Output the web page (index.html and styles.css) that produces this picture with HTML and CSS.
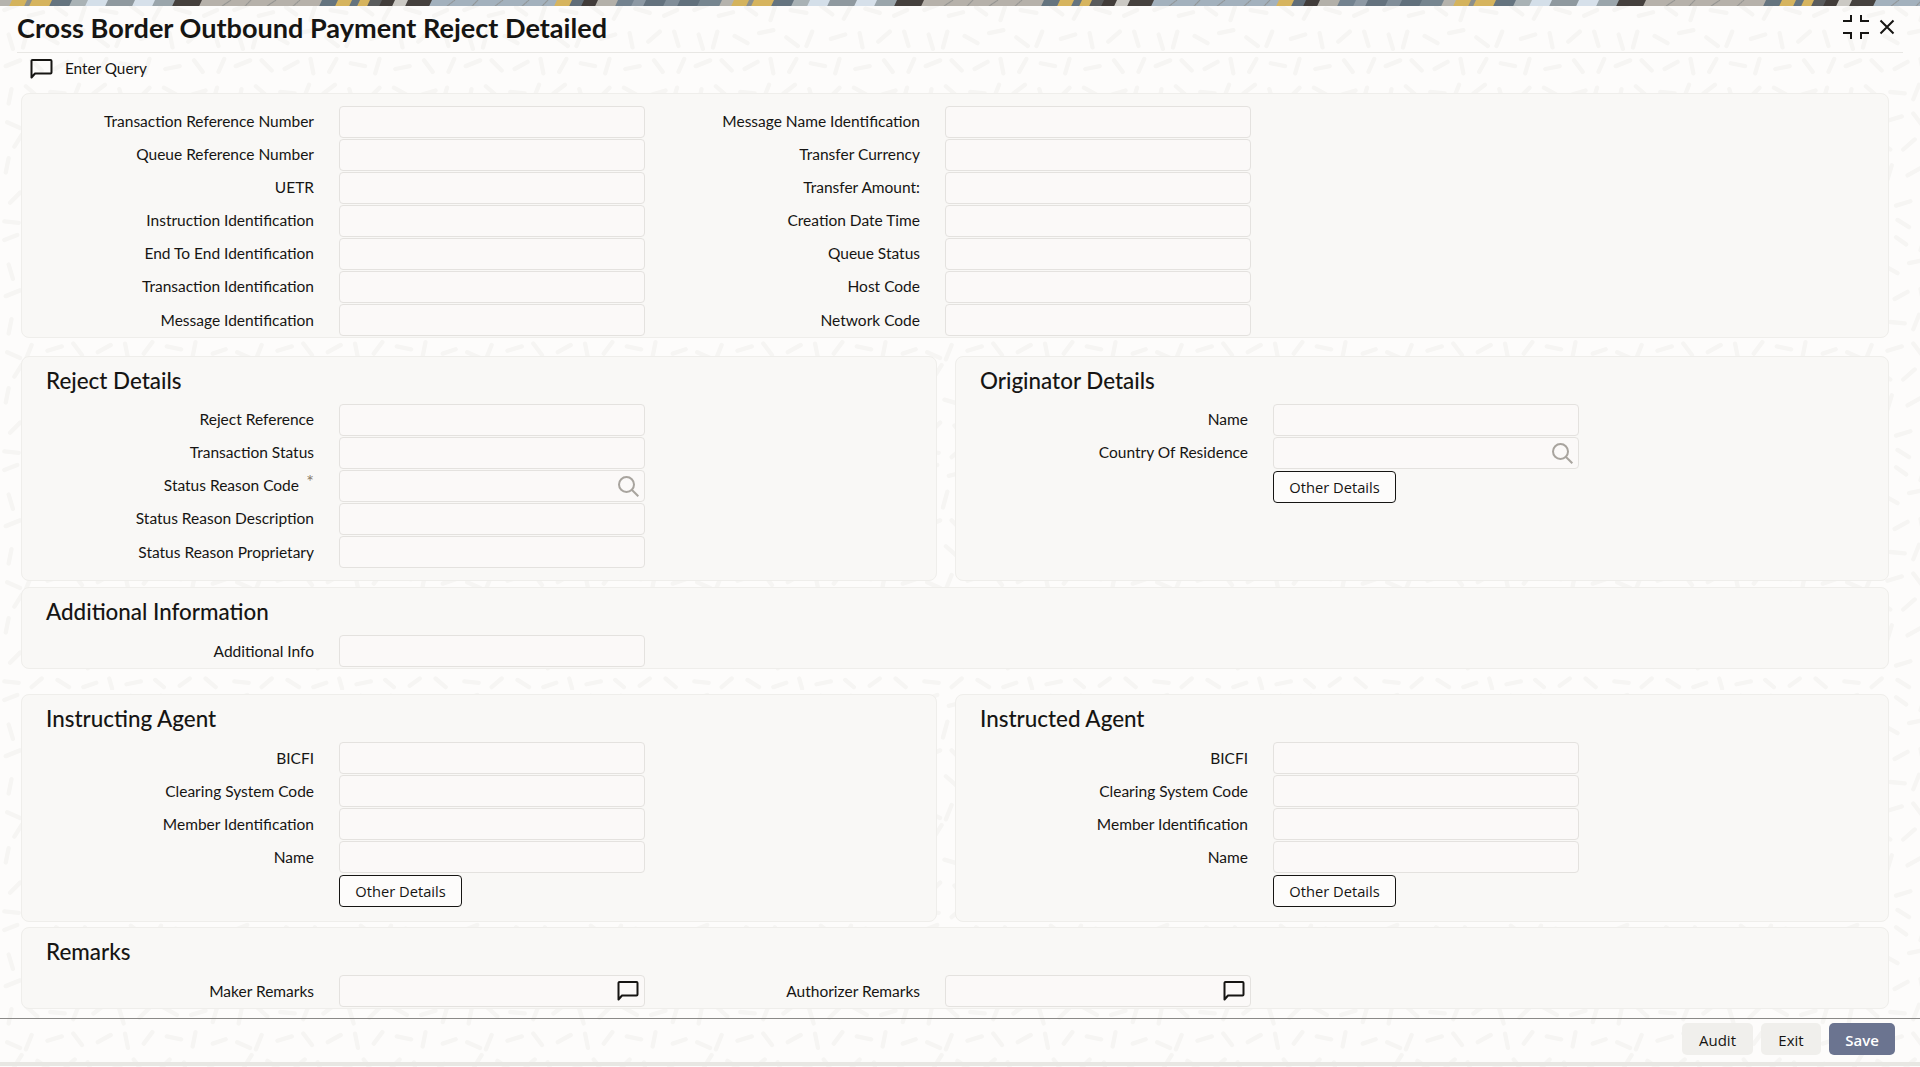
FILE: index.html
```html
<!DOCTYPE html>
<html lang="en">
<head>
<meta charset="utf-8">
<title>Cross Border Outbound Payment Reject Detailed</title>
<link rel="stylesheet" href="styles.css">
</head>
<body>
<svg class="banner" width="1920" height="6" aria-hidden="true">
  <defs>
    <pattern id="band" width="722" height="6" patternUnits="userSpaceOnUse" patternTransform="skewX(-25)">
      <rect width="722" height="6" fill="#b8b3ac"/>
      <rect x="0" width="12" height="6" fill="#b5b3ad"/>
      <rect x="12" width="15" height="6" fill="#d4b35c"/>
      <rect x="27" width="5" height="6" fill="#8b8f8c"/>
      <rect x="32" width="20" height="6" fill="#d6b45e"/>
      <rect x="52" width="20" height="6" fill="#65747f"/>
      <rect x="72" width="16" height="6" fill="#a9b2b5"/>
      <rect x="88" width="20" height="6" fill="#d4dfe9"/>
      <rect x="108" width="27" height="6" fill="#8f999f"/>
      <rect x="135" width="20" height="6" fill="#d6e0ea"/>
      <rect x="155" width="20" height="6" fill="#9aa5ab"/>
      <rect x="175" width="27" height="6" fill="#45403d"/>
      <rect x="202" width="120" height="6" fill="#b6b1aa"/>
      <rect x="322" width="16" height="6" fill="#65747f"/>
      <rect x="338" width="14" height="6" fill="#d6b45e"/>
      <rect x="352" width="8" height="6" fill="#65747f"/>
      <rect x="360" width="10" height="6" fill="#d6b45e"/>
      <rect x="370" width="12" height="6" fill="#5a5c5d"/>
      <rect x="382" width="13" height="6" fill="#423d3a"/>
      <rect x="395" width="13" height="6" fill="#cbc9c4"/>
      <rect x="408" width="24" height="6" fill="#46413e"/>
      <rect x="432" width="125" height="6" fill="#a3b1bd"/>
      <rect x="557" width="15" height="6" fill="#d6b45e"/>
      <rect x="572" width="12" height="6" fill="#616e79"/>
      <rect x="584" width="14" height="6" fill="#413c3a"/>
      <rect x="598" width="20" height="6" fill="#b3b0a9"/>
      <rect x="618" width="16" height="6" fill="#73828f"/>
      <rect x="634" width="12" height="6" fill="#8d99a4"/>
      <rect x="646" width="20" height="6" fill="#64727e"/>
      <rect x="666" width="14" height="6" fill="#818e99"/>
      <rect x="680" width="20" height="6" fill="#61707c"/>
      <rect x="700" width="22" height="6" fill="#76858f"/>
      <path d="M225 6l6-6M248 6l3-6M270 6l6-6M296 6l4-6M450 6l5-6M475 6l3-6M498 6l5-6M525 6l4-6M545 6l3-6" stroke="#8b8c8a" stroke-width="1" fill="none"/>
    </pattern>
  </defs>
  <rect width="1920" height="6" fill="url(#band)"/>
</svg>

<header class="titlebar">
  <h1 class="title">Cross Border Outbound Payment Reject Detailed</h1>
  <div class="window-actions">
    <svg class="icon-collapse" width="26" height="24" viewBox="0 0 26 24" fill="none" stroke="#161513" stroke-width="2"><path d="M8 0v6H0M18 0v6h8M8 24v-6H0M18 24v-6h8"/></svg>
    <svg class="icon-close" width="16" height="16" viewBox="0 0 16 16" fill="none" stroke="#161513" stroke-width="2"><path d="M1.5 1.5l13 13M14.5 1.5l-13 13"/></svg>
  </div>
</header>

<div class="toolbar">
  <svg class="icon-comment" width="23" height="20" viewBox="0 0 23 20" fill="none" stroke="#161513" stroke-width="2"><path d="M1.5 18.500V2a1 1 0 0 1 1-1h18a1 1 0 0 1 1 1v11.500a1 1 0 0 1-1 1H5z" stroke-linejoin="round"/></svg>
  <span class="toolbar-label">Enter Query</span>
</div>

<main class="content">
  <section class="panel panel-top">
    <div class="fields fields-two">
      <label class="lbl">Transaction Reference Number</label><div class="inp"></div><label class="lbl lbl-b">Message Name Identification</label><div class="inp"></div>
      <label class="lbl">Queue Reference Number</label><div class="inp"></div><label class="lbl lbl-b">Transfer Currency</label><div class="inp"></div>
      <label class="lbl">UETR</label><div class="inp"></div><label class="lbl lbl-b">Transfer Amount:</label><div class="inp"></div>
      <label class="lbl">Instruction Identification</label><div class="inp"></div><label class="lbl lbl-b">Creation Date Time</label><div class="inp"></div>
      <label class="lbl">End To End Identification</label><div class="inp"></div><label class="lbl lbl-b">Queue Status</label><div class="inp"></div>
      <label class="lbl">Transaction Identification</label><div class="inp"></div><label class="lbl lbl-b">Host Code</label><div class="inp"></div>
      <label class="lbl lbl-last">Message Identification</label><div class="inp"></div><label class="lbl lbl-b lbl-last">Network Code</label><div class="inp"></div>
    </div>
  </section>

  <div class="split split-first">
    <section class="panel panel-reject">
      <h2 class="heading">Reject Details</h2>
      <div class="fields">
        <label class="lbl">Reject Reference</label><div class="inp"></div>
        <label class="lbl">Transaction Status</label><div class="inp"></div>
        <label class="lbl lbl-req">Status Reason Code<span class="req">*</span></label>
        <div class="inp inp-icon"><svg class="icon-search" width="21" height="21" viewBox="0 0 21 21" fill="none" stroke="#a8a49e" stroke-width="2"><circle cx="8.500" cy="8.500" r="7.500"/><path d="M14 14l6.300 6.300"/></svg></div>
        <label class="lbl">Status Reason Description</label><div class="inp"></div>
        <label class="lbl lbl-last">Status Reason Proprietary</label><div class="inp"></div>
      </div>
    </section>
    <section class="panel">
      <h2 class="heading">Originator Details</h2>
      <div class="fields">
        <label class="lbl">Name</label><div class="inp"></div>
        <label class="lbl">Country Of Residence</label>
        <div class="inp inp-icon"><svg class="icon-search" width="21" height="21" viewBox="0 0 21 21" fill="none" stroke="#a8a49e" stroke-width="2"><circle cx="8.500" cy="8.500" r="7.500"/><path d="M14 14l6.300 6.300"/></svg></div>
        <span></span><button class="btn-outline">Other Details</button>
      </div>
    </section>
  </div>

  <section class="panel panel-single panel-additional">
    <h2 class="heading">Additional Information</h2>
    <div class="fields">
      <label class="lbl">Additional Info</label><div class="inp"></div>
    </div>
  </section>

  <div class="split split-agents">
    <section class="panel panel-agent">
      <h2 class="heading">Instructing Agent</h2>
      <div class="fields">
        <label class="lbl">BICFI</label><div class="inp"></div>
        <label class="lbl">Clearing System Code</label><div class="inp"></div>
        <label class="lbl">Member Identification</label><div class="inp"></div>
        <label class="lbl">Name</label><div class="inp"></div>
        <span></span><button class="btn-outline">Other Details</button>
      </div>
    </section>
    <section class="panel panel-agent">
      <h2 class="heading">Instructed Agent</h2>
      <div class="fields">
        <label class="lbl">BICFI</label><div class="inp"></div>
        <label class="lbl">Clearing System Code</label><div class="inp"></div>
        <label class="lbl">Member Identification</label><div class="inp"></div>
        <label class="lbl">Name</label><div class="inp"></div>
        <span></span><button class="btn-outline">Other Details</button>
      </div>
    </section>
  </div>

  <section class="panel panel-single panel-remarks">
    <h2 class="heading">Remarks</h2>
    <div class="fields fields-two">
      <label class="lbl">Maker Remarks</label>
      <div class="inp inp-icon"><svg class="icon-remark" width="22" height="20" viewBox="0 0 22 20" fill="none" stroke="#161513" stroke-width="2"><path d="M1.500 18.500V2a1 1 0 0 1 1-1h17a1 1 0 0 1 1 1v11.500a1 1 0 0 1-1 1H5z" stroke-linejoin="round"/></svg></div>
      <label class="lbl lbl-b">Authorizer Remarks</label>
      <div class="inp inp-icon"><svg class="icon-remark" width="22" height="20" viewBox="0 0 22 20" fill="none" stroke="#161513" stroke-width="2"><path d="M1.500 18.500V2a1 1 0 0 1 1-1h17a1 1 0 0 1 1 1v11.500a1 1 0 0 1-1 1H5z" stroke-linejoin="round"/></svg></div>
    </div>
  </section>
</main>

<footer class="footer">
  <button class="btn-soft btn-audit">Audit</button>
  <button class="btn-soft btn-exit">Exit</button>
  <button class="btn-primary">Save</button>
</footer>
<div class="bottom-strip"></div>
</body>
</html>
```
FILE: styles.css
```css
* { box-sizing: border-box; }
html, body { margin: 0; padding: 0; }
body {
  width: 1920px;
  height: 1067px;
  overflow: hidden;
  display: flex;
  flex-direction: column;
  font-family: Lato, "Open Sans", "Liberation Sans", sans-serif;
  color: #161513;
  background-color: #fdfcfb;
  background-size: 230px 230px;
  background-image: url("data:image/svg+xml,%3Csvg xmlns='http://www.w3.org/2000/svg' width='320' height='320'%3E%3Cpath fill='none' stroke='%23f6f5f3' stroke-width='6' stroke-linecap='round' d='M6 14l18-7M40 22l20-5M78 10l14 10M112 28l6-18M140 14l22 4M182 8l16 12M214 26l10-18M244 12l20 6M284 22l18-8M12 48l6 20M38 44l-6 22M62 50l18 10M96 46l20-4M134 52l16 12M170 44l-8 20M196 54l20-6M236 46l4 20M262 58l16-14M298 44l6 20M8 92l20-8M44 84l14 14M76 96l18-10M112 82l4 20M138 100l10-18M168 88l20 4M208 82l-6 20M230 96l20-4M270 84l12 16M304 100l8-18M16 124l-4 20M36 120l16 14M70 128l20 2M110 118l-8 20M130 130l16-12M166 124l6 20M194 136l14-14M228 122l18 10M266 132l20-6M302 122l-6 20M10 170l18 8M44 160l-8 20M66 168l20-6M102 158l12 16M136 170l18-10M174 158l4 20M200 172l12-16M232 162l20 4M272 156l-4 20M296 172l18-6M20 204l10-16M52 196l18 12M88 208l16-14M122 198l8 18M150 210l18-8M186 194l12 16M222 208l14-14M256 198l4 20M282 212l16-12M8 240l4-20M34 236l20 6M72 230l-6 20M94 244l18-10M134 230l10 18M164 244l18-4M202 232l16 12M240 246l12-16M276 234l18 8M306 230l-4 20M14 282l14-14M48 272l12 16M78 286l20-6M118 270l4 20M144 284l16-12M180 276l18 6M218 268l-8 20M238 282l20-4M278 272l10 16M304 286l10-16M6 308l20 2M44 316l14-12M80 306l16 10M116 316l18-6M152 304l4 14M176 312l20-4M216 306l12 10M250 314l14-10M286 304l14 12'/%3E%3C/svg%3E");
}

.banner { display: block; flex: none; }

.titlebar {
  flex: none;
  height: 47px;
  margin: 0 17px;
  border-bottom: 1px solid #e8e7e4;
  display: flex;
  align-items: center;
  justify-content: space-between;
}
.title {
  margin: 0 0 3px;
  font-size: 27.1px;
  font-weight: 700;
  line-height: 34px;
  color: #161513;
}
.window-actions {
  display: flex;
  align-items: center;
  gap: 10px;
  margin-right: 8px;
  margin-bottom: 4px;
}
.icon-collapse, .icon-close { display: block; }

.toolbar {
  flex: none;
  height: 40px;
  padding: 0 0 9px 30px;
  display: flex;
  align-items: center;
  gap: 12px;
}
.toolbar-label { font-size: 15.3px; line-height: 20px; margin-bottom: 1px; }

.content {
  flex: none;
  margin: 0 31px 0 21px;
  display: flex;
  flex-direction: column;
}

.panel {
  background: #f9f8f6;
  border: 1px solid #efeeeb;
  border-radius: 8px;
}
.panel-top { padding: 12px 0 1px; }
.panel-reject { padding-bottom: 12px; }
.panel-agent { padding-bottom: 15px; }
.panel-single { padding-bottom: 1px; }
.panel-additional { margin-top: 6px; }
.panel-remarks { margin-top: 5px; }

.split {
  display: grid;
  grid-template-columns: 916px 934px;
  column-gap: 18px;
}
.split-first { margin-top: 18px; }
.split-agents { margin-top: 25px; }

.heading {
  margin: 0;
  height: 47px;
  padding-left: 24px;
  font-size: 22.4px;
  line-height: 47px;
  font-weight: 500;
  color: #161513;
}
.panel-single .heading { line-height: 48px; }

.fields {
  display: grid;
  grid-template-columns: 317px 306px;
  grid-auto-rows: 32px;
  row-gap: 1px;
}
.fields-two { grid-template-columns: 317px 306px 300px 306px; }

.lbl {
  padding-right: 25px;
  text-align: right;
  font-size: 15.5px;
  line-height: 32px;
  white-space: nowrap;
  color: #161513;
}
.panel-top .lbl, .split-first .lbl { line-height: 30px; }
.panel-top .lbl-last, .split-first .lbl-last { line-height: 32px; }
.lbl-req { position: relative; padding-right: 40px; }
.req {
  position: absolute;
  right: 25px;
  top: -4px;
  font-size: 18px;
  color: #8a7a68;
}

.inp {
  height: 32px;
  background: #fbf9f8;
  border: 1px solid #e4e2df;
  border-radius: 4px;
}
.inp-icon {
  display: flex;
  align-items: center;
  justify-content: flex-end;
  padding-right: 5px;
}
.icon-search, .icon-remark { display: block; }

.btn-outline {
  justify-self: start;
  width: 123px;
  height: 32px;
  margin-top: 1px;
  background: #fdfcfb;
  border: 1px solid #161513;
  border-radius: 4px;
  font-family: "Open Sans", Lato, sans-serif;
  font-size: 14.7px;
  color: #161513;
  padding: 0;
}

.footer {
  flex: none;
  margin-top: 9px;
  height: 44px;
  border-top: 1px solid #8a8987;
  padding: 4px 25px 0 0;
  display: flex;
  justify-content: flex-end;
  gap: 8px;
}
.footer button {
  height: 32px;
  border: 0;
  border-radius: 5px;
  padding: 1px 0 0;
  font-family: "Open Sans", Lato, sans-serif;
  font-size: 15px;
}
.btn-soft { background: #f0efec; color: #161513; }
.btn-audit { width: 71px; }
.btn-exit { width: 60px; }
.footer .btn-primary { width: 66px; background: #6b7490; color: #fff; font-weight: 600; }

.bottom-strip { flex: none; height: 4px; background: #e8e7e3; }
```
